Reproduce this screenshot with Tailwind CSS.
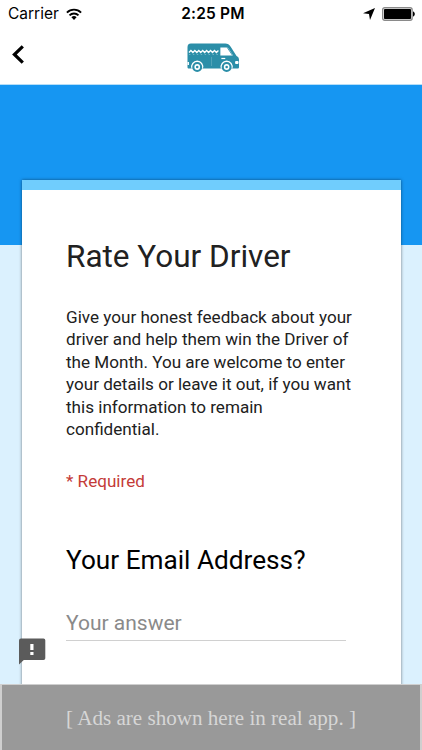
<!DOCTYPE html>
<html lang="en">
<head>
  <meta charset="UTF-8" />
  <meta name="viewport" content="width=device-width, initial-scale=1.0" />
  <title>Rate Your Driver</title>
  <script src="https://cdn.jsdelivr.net/npm/@tailwindcss/browser@4"></script>
</head>
<body class="bg-white font-['Roboto',sans-serif]">
  <div class="relative w-[422px] h-[750px] overflow-hidden flex flex-col">

    <!-- Status bar -->
    <div class="h-7 shrink-0 grid grid-cols-[1fr_auto_1fr] items-center pl-2 pr-[7px] font-['Inter',sans-serif] text-black">
      <div class="flex items-center gap-[7px]">
        <span class="text-[15.5px] leading-7">Carrier</span>
        <svg class="w-4 h-3" viewBox="0 0 16 12" fill="none" stroke="#000" stroke-width="1.9">
          <path d="M.9 4.6a10 10 0 0 1 14.2 0" />
          <path d="M3.5 7.4a6.3 6.3 0 0 1 9 0" />
          <path d="M8 12L5.4 9.3a3.7 3.7 0 0 1 5.2 0z" fill="#000" stroke="none" />
        </svg>
      </div>
      <span class="pl-[3px] text-[15.5px] leading-7 font-semibold tracking-[0.2px]">2:25 PM</span>
      <div class="flex items-center justify-end gap-[7px]">
        <svg class="w-3 h-3" viewBox="0 0 12 12"><path d="M12 0L7 12 6 6 0 5.3z" /></svg>
        <svg class="w-[33px] h-[14px]" viewBox="0 0 33 14">
          <rect x=".7" y=".7" width="29.4" height="12.6" rx="2" fill="#fff" stroke="#8a8a8a" stroke-width="1.4" />
          <rect x="2" y="2" width="27" height="10" rx=".8" />
          <path d="M31 4.5c2.4.6 2.4 4.4 0 5z" />
        </svg>
      </div>
    </div>

    <!-- Nav bar -->
    <div class="h-[57px] shrink-0 grid grid-cols-[1fr_auto_1fr] items-center pl-[12px] pr-[7px] border-b border-[#b5def8]">
      <svg class="w-3 h-[19px] -mt-[3px]" viewBox="0 0 12 19" fill="none" stroke="#000" stroke-width="3.2"><path d="M10.800 1.400L2.400 9.500l8.400 8.100" /></svg>
      <svg class="w-[53px] h-[30px] mt-[4px]" viewBox="0 0 54 30" preserveAspectRatio="none">
        <path d="M4 .5h35c2.500 0 4 1 5.500 3.200l6 9.300c1.800.8 2.500 2 2.500 4v7c0 1-.6 1.500-1.500 1.500H2C1 25.500.5 25 .5 24V4.500c0-2.500 1-4 3.500-4z" fill="#2b8ea8" />
        <path d="M34 4.500h6c1.200 0 2 .4 2.700 1.500l4.300 6.500H34z" fill="#fff" />
        <path d="M41 4.500l5.500 8" stroke="#2b8ea8" stroke-width=".9" />
        <path d="M2 9.500l2-2 2 2 2-2 2 2 2-2 2 2 2-2 2 2 2-2 2 2 2-2 2 2 2-2 2 2 2-2" stroke="#fff" stroke-width="1.300" fill="none" />
        <path d="M2 11.500h30" stroke="#8cc6d4" stroke-width=".7" stroke-dasharray="1.500 2.500" />
        <path d="M25 14v9" stroke="#6fb3c4" stroke-width=".6" />
        <path d="M35 15.500h4" stroke="#fff" stroke-width="1.200" />
        <rect x="49" y="18" width="3.500" height="3" rx="1" fill="#fff" />
        <rect x=".5" y="19" width="1.500" height="3" fill="#fff" />
        <path d="M4.500 25.500a6.200 6.200 0 1 1 11.800 0M34.500 25.500a6.200 6.200 0 1 1 11.800 0" fill="#fff" />
        <g fill="#fff" stroke="#2b8ea8">
          <circle cx="10.400" cy="24" r="4" stroke-width="2.200" />
          <circle cx="40.400" cy="24" r="4" stroke-width="2.200" />
        </g>
        <g fill="#2b8ea8"><circle cx="10.400" cy="24" r="1.300" /><circle cx="40.400" cy="24" r="1.300" /></g>
      </svg>
    </div>

    <!-- Form page -->
    <main class="flex-1 min-h-0 pt-[95px] px-[21.5px] bg-[linear-gradient(to_bottom,#1696f2_160.5px,#dbf1fe_160.5px)]">
      <div class="h-[520px] bg-white border-t-[10px] border-[#70cdfd] shadow-[0_0_3px_rgba(0,0,0,0.5)] pl-[44.5px] pr-[55px] text-[#212121]">
        <h1 class="pt-[47px] text-[31.5px] leading-[40px] whitespace-nowrap">Rate Your Driver</h1>
        <p class="mt-[29px] text-[17.1px] leading-[22.45px] whitespace-nowrap">
          Give your honest feedback about your<br>
          driver and help them win the Driver of<br>
          the Month. You are welcome to enter<br>
          your details or leave it out, if you want<br>
          this information to remain<br>
          confidential.
        </p>
        <p class="mt-[29.5px] text-[17.1px] leading-[22px] text-[#c43b38]">* Required</p>
        <h2 class="mt-[51px] text-[26.2px] leading-[34px] whitespace-nowrap text-black">Your Email Address?</h2>
        <div class="mt-[28px] h-[36px] border-b border-[#d0d0d0] text-[21px] leading-[36px] text-[#8a8a8a]">Your answer</div>
      </div>
    </main>

    <!-- Report button -->
    <svg class="absolute left-[19px] top-[638px] w-[27px] h-[27px]" viewBox="0 0 27 27">
      <path d="M2 .5h22.500a1.800 1.800 0 0 1 1.800 1.800v17.900a1.800 1.800 0 0 1-1.800 1.800H4.800L0 26.500V2.500a2 2 0 0 1 2-2z" fill="#5b5b5b" />
      <path d="M11.300 6h3.200v6h-3.200zM11.300 14h3.200v3h-3.200z" fill="#fff" />
    </svg>

    <!-- Ad placeholder -->
    <div class="absolute inset-x-0 bottom-0 h-[66px] pt-0.5 border-2 border-b-0 border-t-[1.5px] border-[#cfcfcf] bg-[#999999] flex items-center justify-center font-['Liberation_Serif',serif] text-[21.1px] text-[#d6d6d6] whitespace-nowrap">[ Ads are shown here in real app. ]</div>
  </div>
</body>
</html>
